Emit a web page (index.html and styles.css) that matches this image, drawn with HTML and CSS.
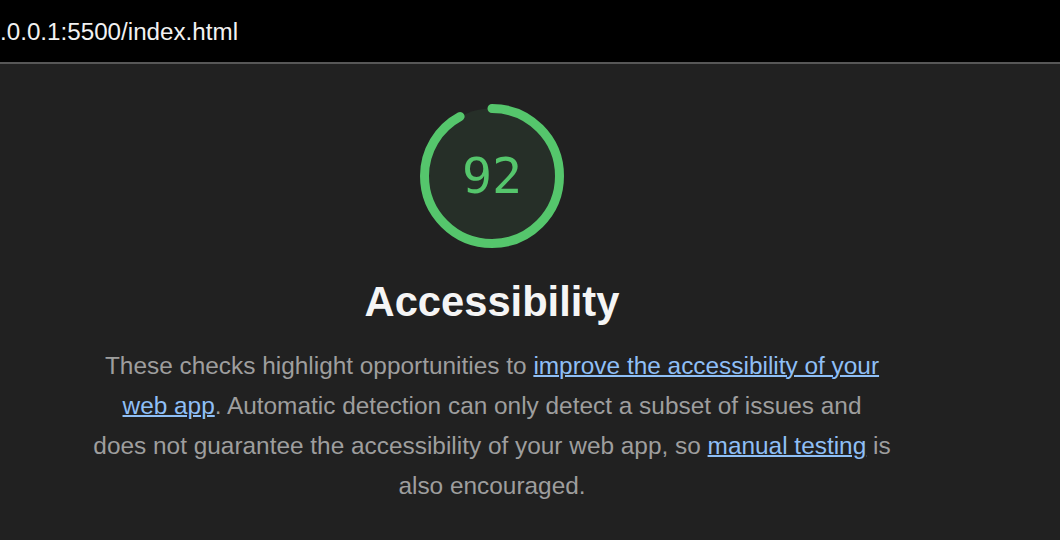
FILE: index.html
```html
<!DOCTYPE html>
<html lang="en">
<head>
<meta charset="utf-8">
<title>Lighthouse Accessibility</title>
<link rel="stylesheet" href="styles.css">
</head>
<body>
<header class="topbar">
  <span class="url">.0.0.1:5500/index.html</span>
</header>
<main class="report">
  <section class="category">
    <div class="gauge">
      <svg class="gauge__svg" viewBox="0 0 144 144" width="144" height="144" aria-hidden="true">
        <circle class="gauge__base" cx="72" cy="72" r="67.5"></circle>
        <circle class="gauge__arc" cx="72" cy="72" r="67.5" transform="rotate(-90 72 72)"></circle>
      </svg>
      <span class="gauge__value">92</span>
    </div>
    <h1 class="category__title">Accessibility</h1>
    <p class="category__desc">These checks highlight opportunities to <a href="#">improve the accessibility of your web app</a>. Automatic detection can only detect a subset of issues and does not guarantee the accessibility of your web app, so <a href="#">manual testing</a> is also encouraged.</p>
  </section>
</main>
</body>
</html>
```

FILE: styles.css
```css
* { box-sizing: border-box; }

html, body {
  margin: 0;
  padding: 0;
  background: #212121;
  height: 100%;
  overflow: hidden;
}

body {
  font-family: "Liberation Sans", Arial, sans-serif;
}

.topbar {
  height: 64px;
  background: #000;
  border-bottom: 2px solid #575757;
  display: flex;
  align-items: center;
  padding-top: 2px;
}

.url {
  color: #f2f2f2;
  font-size: 24.2px;
  line-height: 1;
}

.report {
  display: flex;
  justify-content: center;
  padding-right: 76px;
  padding-top: 40px;
}

.category {
  display: flex;
  flex-direction: column;
  align-items: center;
  width: 798px;
}

.gauge {
  position: relative;
  width: 144px;
  height: 144px;
}

.gauge__svg {
  display: block;
}

.gauge__base {
  fill: #262f28;
  stroke: none;
}

.gauge__arc {
  fill: none;
  stroke: #55c66c;
  stroke-width: 9;
  stroke-linecap: round;
  stroke-dasharray: 390.2 424.1;
}

.gauge__value {
  position: absolute;
  inset: 0;
  display: flex;
  align-items: center;
  justify-content: center;
  font-family: "DejaVu Sans Mono", monospace;
  font-size: 50px;
  color: #55c66c;
}

.category__title {
  margin: 29px 0 0;
  font-size: 41.7px;
  line-height: 50px;
  font-weight: 700;
  color: #f5f5f5;
}

.category__desc {
  margin: 19px 0 0;
  font-size: 24.4px;
  line-height: 40px;
  color: #9e9e9e;
  text-align: center;
}

.category__desc a {
  color: #8fbff6;
  text-decoration: underline;
  text-decoration-thickness: 2px;
}
```
